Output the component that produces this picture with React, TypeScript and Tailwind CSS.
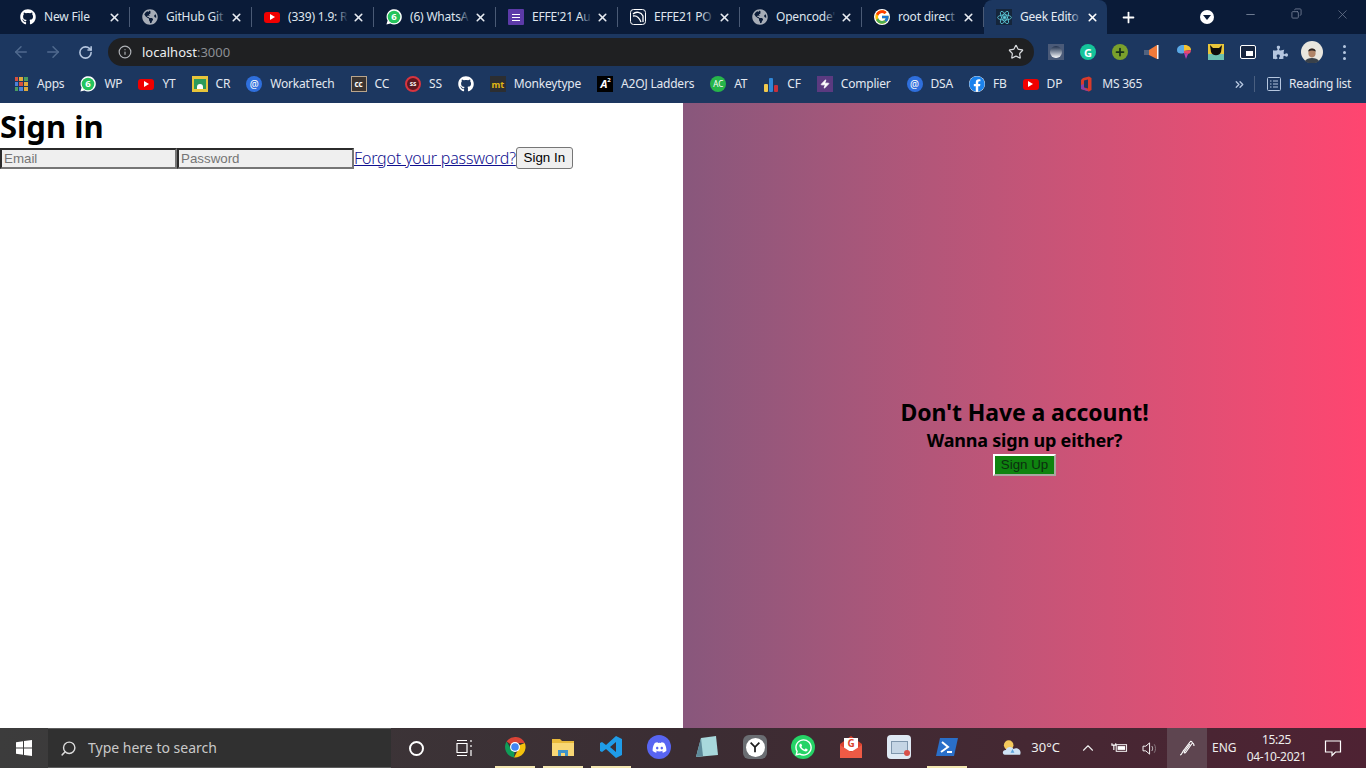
import type { ReactNode } from "react";
import { ArrowLeft, ArrowRight, ChevronUp, ChevronsRight, Copy, Info, Minus, Plus, RotateCw, Search, Star, X, Zap } from "lucide-react";
import { FaDiscord, FaFacebook, FaGithub, FaGlobeAmericas, FaPuzzlePiece, FaWhatsapp } from "react-icons/fa";
import { FcGoogle } from "react-icons/fc";

const Whats = () => (
  <svg viewBox="0 0 16 16" width="16" height="16">
    <path d="M0.4 15.6 L1.6 11.6 A7.6 7.6 0 1 1 4.4 14.4 Z" fill="#fff" />
    <circle cx="8" cy="8" r="6.3" fill="#25c45c" />
    <text x="8" y="11.3" textAnchor="middle" fontSize="9.5" fontWeight="700" fill="#fff">6</text>
  </svg>
);

const Yt = () => (
  <span className="flex h-[11px] w-4 items-center justify-center rounded-[3px] bg-[#f00000]">
    <span className="h-0 w-0 border-y-[3px] border-l-[5px] border-y-transparent border-l-white" />
  </span>
);

const Globe = () => <FaGlobeAmericas size={16} className="text-[#a7adb7]" />;

const At = () => (
  <span className="flex h-4 w-4 items-center justify-center rounded-full bg-[#2f6fdc] text-[10px] leading-none text-white">@</span>
);

const Forms = () => (
  <span className="flex h-4 w-4 flex-col items-center justify-center gap-[2px] rounded-[1px] bg-[#5c3aa8]">
    <span className="h-px w-2 bg-white" />
    <span className="h-px w-2 bg-white" />
    <span className="h-px w-2 bg-white" />
  </span>
);

const ReactLogo = () => (
  <span className="flex h-4 w-4 items-center justify-center bg-[#15253a]">
    <svg viewBox="0 0 24 24" width="15" height="15" fill="none" stroke="#5fd0df" strokeWidth="1.3">
      <circle cx="12" cy="12" r="2" fill="#5fd0df" />
      <ellipse cx="12" cy="12" rx="11" ry="4.2" />
      <ellipse cx="12" cy="12" rx="11" ry="4.2" transform="rotate(60 12 12)" />
      <ellipse cx="12" cy="12" rx="11" ry="4.2" transform="rotate(120 12 12)" />
    </svg>
  </span>
);

const Knight = () => (
  <svg viewBox="0 0 16 16" width="16" height="16">
    <rect x="0.5" y="0.5" width="15" height="15" rx="3" fill="#10213d" stroke="#fff" />
    <path d="M3 5 C6 2 11 3 13 7 L13 13 M3 7 C7 6 9 8 11 13" fill="none" stroke="#fff" strokeWidth="1.3" />
  </svg>
);

const tabs: { icon: ReactNode; title: string }[] = [
  { icon: <FaGithub size={16} className="text-white" />, title: "New File" },
  { icon: <Globe />, title: "GitHub Git" },
  { icon: <Yt />, title: "(339) 1.9: R" },
  { icon: <Whats />, title: "(6) WhatsA" },
  { icon: <Forms />, title: "EFFE'21 Au" },
  { icon: <Knight />, title: "EFFE21 PO" },
  { icon: <Globe />, title: "Opencode'" },
  { icon: <FcGoogle size={16} className="rounded-full bg-white" />, title: "root direct" },
];

const AppsGrid = () => {
  const colors = ["#d8503f", "#e0a93a", "#4a9d5f", "#4d82d8", "#d8503f", "#e0a93a", "#4a9d5f", "#4d82d8", "#e0a93a"];
  return (
    <span className="grid h-[14px] w-[13px] grid-cols-3 gap-[1.5px]">
      {colors.map((c, i) => (
        <span key={i} className="h-[3.6px] w-[3.4px]" style={{ backgroundColor: c }} />
      ))}
    </span>
  );
};

const bookmarks: { icon: ReactNode; label?: string }[] = [
  { icon: <AppsGrid />, label: "Apps" },
  { icon: <Whats />, label: "WP" },
  { icon: <Yt />, label: "YT" },
  {
    icon: (
      <span className="flex h-4 w-4 items-center justify-center bg-[#e8c53a]">
        <span className="flex h-[10px] w-[12px] items-end justify-center bg-[#2e9b5b]">
          <span className="h-[5px] w-[6px] rounded-t-full bg-white" />
        </span>
      </span>
    ),
    label: "CR",
  },
  { icon: <At />, label: "WorkatTech" },
  {
    icon: (
      <span className="flex h-4 w-4 items-center justify-center border border-[#b9a58c] bg-[#3a3431] text-[8px] font-bold leading-none text-white">cc</span>
    ),
    label: "CC",
  },
  {
    icon: (
      <span className="flex h-4 w-4 items-center justify-center rounded-full border-2 border-[#d8343f] bg-[#5c1820] text-[6px] font-bold leading-none text-white">SS</span>
    ),
    label: "SS",
  },
  { icon: <FaGithub size={16} className="text-white" /> },
  {
    icon: (
      <span className="flex h-4 w-4 items-center justify-center bg-[#2c2e31] text-[9px] font-bold leading-none text-[#e2b714]">mt</span>
    ),
    label: "Monkeytype",
  },
  {
    icon: (
      <span className="flex h-4 w-4 items-start justify-center bg-black pl-px text-[11px] font-bold italic leading-[15px] text-white">
        A<span className="text-[6px] not-italic leading-[8px]">2</span>
      </span>
    ),
    label: "A2OJ Ladders",
  },
  {
    icon: (
      <span className="flex h-4 w-4 items-center justify-center rounded-full bg-[#27b54a] text-[8px] leading-none text-white">AC</span>
    ),
    label: "AT",
  },
  {
    icon: (
      <span className="flex h-4 w-4 items-end justify-center gap-px">
        <span className="h-2 w-1 rounded-[1px] bg-[#f1c84c]" />
        <span className="h-[14px] w-1 rounded-[1px] bg-[#2f86d6]" />
        <span className="h-[7px] w-1 rounded-[1px] bg-[#c8303a]" />
      </span>
    ),
    label: "CF",
  },
  {
    icon: (
      <span className="flex h-4 w-4 items-center justify-center bg-[#5b3a80]">
        <Zap size={10} className="fill-white text-white" />
      </span>
    ),
    label: "Complier",
  },
  { icon: <At />, label: "DSA" },
  { icon: <FaFacebook size={16} className="rounded-full bg-white text-[#1b82ed]" />, label: "FB" },
  { icon: <Yt />, label: "DP" },
  {
    icon: (
      <svg viewBox="0 0 16 16" width="16" height="16">
        <path d="M5 2 L11 0.5 L13.5 2 V14 L11 15.5 L3 13 V4 Z" fill="#d83b2b" />
        <path d="M6 4.5 L10 3.5 V12.5 L6 11.5 Z" fill="#1c3760" />
        <path d="M3 13 L3 9 L6 8 V11.5 L11 15.5 Z" fill="#8a3ea8" />
      </svg>
    ),
    label: "MS 365",
  },
];

const extensions: ReactNode[] = [
  <span className="flex h-4 w-4 items-center justify-center bg-[#4a5a78]">
    <span className="h-3 w-3 rounded-full bg-gradient-to-b from-[#20304c] to-white" />
  </span>,
  <span className="flex h-4 w-4 items-center justify-center rounded-full bg-[#15c39a] text-[11px] font-bold leading-none text-white">G</span>,
  <span className="flex h-4 w-4 items-center justify-center rounded-full bg-[#7aa02c]">
    <Plus size={12} strokeWidth={3.5} className="text-[#16301a]" />
  </span>,
  <svg viewBox="0 0 16 16" width="16" height="16">
    <path d="M0 6 H5 V11 H0 Z" fill="#50627f" />
    <path d="M5 6 L13 1 V15 L5 11 Z" fill="#f07a3a" />
    <rect x="13" y="1" width="1.5" height="14" fill="#f3f3f3" />
  </svg>,
  <svg viewBox="0 0 16 16" width="16" height="16">
    <path d="M1 6 C1 2 5 0.5 8 1 V9 C5 10 1 10 1 6 Z" fill="#5aa9e6" />
    <path d="M8 1 C12 0.5 15 3 15 6 L8 7 Z" fill="#f4c22f" />
    <path d="M8 7 L15 6 C15 9 13 10 11 10 L8 9 Z" fill="#e8486a" />
    <path d="M8 9 L12 10 L10 15 Z" fill="#b83fb0" />
  </svg>,
  <svg viewBox="0 0 16 16" width="16" height="16">
    <rect width="16" height="16" fill="#e8c53a" />
    <rect y="10" width="16" height="6" fill="#6cc0b0" />
    <path d="M2 1 L5 4 H11 L14 1 L13 8 A5.5 5.5 0 0 1 3 8 Z" fill="#0c0c0c" />
  </svg>,
  <span className="flex h-[14px] w-4 items-end justify-end rounded-[2px] border border-white bg-[#16253f] p-[2px]">
    <span className="h-[5px] w-[7px] bg-white" />
  </span>,
  <FaPuzzlePiece size={15} className="text-[#b5c6df]" />,
  <svg viewBox="0 0 22 22" width="22" height="22">
    <circle cx="11" cy="11" r="11" fill="#e9e6de" />
    <path d="M4 20 C6 16 16 16 18 20 A11 11 0 0 1 4 20 Z" fill="#39414a" />
    <ellipse cx="11" cy="12" rx="3.6" ry="4.4" fill="#b08468" />
    <path d="M7.2 10.5 C7 6.5 15 6.5 14.8 10.5 C12 9 10 9 7.2 10.5 Z" fill="#2a2320" />
  </svg>,
  <span className="flex flex-col gap-[3px]">
    <span className="h-[3px] w-[3px] rounded-full bg-[#b5c6df]" />
    <span className="h-[3px] w-[3px] rounded-full bg-[#b5c6df]" />
    <span className="h-[3px] w-[3px] rounded-full bg-[#b5c6df]" />
  </span>,
];

const taskIcons: { icon: ReactNode; open?: boolean }[] = [
  {
    open: true,
    icon: (
      <svg viewBox="0 0 24 24" width="24" height="24">
        <path d="M12 12 L3.6 6.5 A10.5 10.5 0 0 1 21.8 8 L12 8 Z" fill="#db4437" />
        <path d="M12 12 L21.8 8 A10.5 10.5 0 0 1 11 22.4 L16 13 Z" fill="#f4c20d" />
        <path d="M12 12 L11 22.4 A10.5 10.5 0 0 1 3.6 6.5 L8 14 Z" fill="#0f9d58" />
        <circle cx="12" cy="12" r="5" fill="#fff" />
        <circle cx="12" cy="12" r="3.8" fill="#4285f4" />
      </svg>
    ),
  },
  {
    open: true,
    icon: (
      <svg viewBox="0 0 24 24" width="24" height="24">
        <path d="M1 4 H9 L11 6 H23 V21 H1 Z" fill="#e8b93a" />
        <rect x="1" y="8" width="22" height="13" fill="#f8d775" />
        <rect x="7" y="15" width="10" height="6" fill="#3f93c9" />
        <rect x="10" y="18" width="4" height="3" fill="#f8d775" />
      </svg>
    ),
  },
  {
    open: true,
    icon: (
      <svg viewBox="0 0 24 24" width="24" height="24">
        <path d="M17 1 L23 4 V20 L17 23 L7 14 L3 17 L1 16 V8 L3 7 L7 10 Z M17 7 L11 12 L17 17 Z" fill="#1f9ce8" fillRule="evenodd" />
      </svg>
    ),
  },
  {
    icon: (
      <span className="flex h-6 w-6 items-center justify-center rounded-full bg-[#5865f2]">
        <FaDiscord size={15} className="text-white" />
      </span>
    ),
  },
  {
    icon: (
      <svg viewBox="0 0 24 24" width="24" height="24">
        <path d="M6 3 L21 1 L23 20 L1 22 Z" fill="#a8d8dc" />
        <path d="M6 3 L1 22 L8 21 Z" fill="#5d8a9a" />
      </svg>
    ),
  },
  {
    icon: (
      <span className="flex h-6 w-6 items-center justify-center rounded-md bg-[#6a6d72]">
        <span className="flex h-[19px] w-[19px] items-center justify-center rounded-full bg-white">
          <svg viewBox="0 0 16 16" width="14" height="14" fill="none" stroke="#1d1d1d" strokeWidth="2">
            <path d="M3 3 L8 8 L13 3 M8 8 V14" />
          </svg>
        </span>
      </span>
    ),
  },
  {
    icon: (
      <span className="flex h-6 w-6 items-center justify-center rounded-full bg-[#25d366]">
        <FaWhatsapp size={19} className="text-white" />
      </span>
    ),
  },
  {
    icon: (
      <svg viewBox="0 0 24 24" width="24" height="24">
        <path d="M1 9 L12 1 L23 9 V23 H1 Z" fill="#d9432f" />
        <rect x="5" y="3" width="14" height="13" fill="#fff" />
        <path d="M1 10 L12 17 L23 10 V23 H1 Z" fill="#ee5a45" />
        <text x="12" y="12" textAnchor="middle" fontSize="10" fontWeight="700" fill="#d9432f">G</text>
      </svg>
    ),
  },
  {
    icon: (
      <span className="flex h-6 w-6 items-center justify-center rounded-sm bg-[#dfe9f4]">
        <span className="relative h-[13px] w-[17px] border border-[#7f96ad] bg-[#c5d5e5]">
          <span className="absolute -bottom-[3px] -right-[3px] h-[6px] w-[6px] rounded-full bg-[#d8504a]" />
        </span>
      </span>
    ),
  },
  {
    open: true,
    icon: (
      <svg viewBox="0 0 24 24" width="24" height="24">
        <path d="M5 3 H23 L19 21 H1 Z" fill="#2a6fc9" />
        <path d="M7 7 L13 12 L6 17" fill="none" stroke="#fff" strokeWidth="2" />
        <path d="M12 17 H17" stroke="#fff" strokeWidth="2" />
      </svg>
    ),
  },
];

function Tab({ icon, title }: { icon: ReactNode; title: string }) {
  return (
    <div className="flex h-full w-[122px] shrink-0 items-center">
      <div className="flex w-[121px] items-center pl-3 pr-2">
        <span className="flex w-4 shrink-0 items-center justify-center">{icon}</span>
        <span className="relative ml-2 flex-1 overflow-hidden whitespace-nowrap text-xs leading-4 tracking-[-0.2px] text-[#dfe5ee]">
          {title}
          <span className="absolute inset-y-0 right-0 w-[12px] bg-gradient-to-r from-transparent to-[#0a1b38]" />
        </span>
        <X size={13} strokeWidth={3} className="ml-1 shrink-0 text-[#e8ecf2]" />
      </div>
      <span className="h-5 w-px bg-[#4a5a75]" />
    </div>
  );
}

export default function App() {
  return (
    <div className="flex h-screen flex-col overflow-hidden font-['Noto_Sans',sans-serif]">
      {/* tab strip */}
      <div className="flex h-[34px] shrink-0 items-stretch bg-[#0a1b38] pl-2">
        {tabs.map((t) => (
          <Tab key={t.title} icon={t.icon} title={t.title} />
        ))}
        <div className="flex w-[123px] shrink-0 items-center rounded-t-lg bg-[#1c3760] pl-3 pr-2">
          <ReactLogo />
          <span className="relative ml-2 flex-1 overflow-hidden whitespace-nowrap text-xs leading-4 tracking-[-0.2px] text-[#e6ebf3]">
            Geek Edito
            <span className="absolute inset-y-0 right-0 w-[12px] bg-gradient-to-r from-transparent to-[#1c3760]" />
          </span>
          <X size={13} strokeWidth={3} className="ml-1 shrink-0 text-white" />
        </div>
        <div className="flex w-[44px] items-center justify-center">
          <Plus size={17} strokeWidth={2.5} className="text-white" />
        </div>
        <div className="ml-[49px] flex w-[16px] items-center justify-center">
          <span className="flex h-[14px] w-[14px] shrink-0 items-center justify-center rounded-full bg-white">
            <span className="h-0 w-0 border-x-[4px] border-t-[5px] border-x-transparent border-t-[#0a1b38]" />
          </span>
        </div>
        <div className="ml-[13px] flex w-[47px] items-start justify-center pt-2">
          <Minus size={13} className="text-[#6d7a90]" />
        </div>
        <div className="flex w-[47px] items-start justify-center pt-2">
          <Copy size={11} className="-scale-x-100 text-[#6d7a90]" />
        </div>
        <div className="flex w-[47px] items-start justify-center pt-[7px]">
          <X size={15} strokeWidth={1.2} className="text-[#6d7a90]" />
        </div>
      </div>

      {/* toolbar */}
      <div className="flex h-[33px] shrink-0 items-center bg-[#1c3760] pl-[12px] pt-[3px]">
        <ArrowLeft size={18} strokeWidth={2} className="text-[#506a8e]" />
        <ArrowRight size={18} strokeWidth={2} className="ml-[14px] text-[#506a8e]" />
        <RotateCw size={15} strokeWidth={2.5} className="ml-[16px] text-[#b5c6df]" />
        <div className="ml-[15px] flex h-7 w-[926px] items-center rounded-full bg-[#1f2022] pl-[10px] pr-[10px]">
          <Info size={14} className="text-[#b0b3b8]" />
          <span className="ml-[10px] text-[13px] leading-none text-[#eceef0]">
            localhost<span className="text-[#8c8f94]">:3000</span>
          </span>
          <Star size={16} strokeWidth={1.8} className="ml-auto text-[#d9dbde]" />
        </div>
        <div className="ml-[6px] flex items-center">
          {extensions.map((e, i) => (
            <span key={i} className="flex w-8 items-center justify-center">
              {e}
            </span>
          ))}
        </div>
      </div>

      {/* bookmarks */}
      <div className="flex h-9 shrink-0 items-center bg-[#1c3760] pb-[2px] pl-[13px] text-xs text-[#e3e8f0]">
        <div className="flex items-center gap-4">
          {bookmarks.map((b, i) => (
            <div key={i} className="flex items-center gap-2">
              <span className="flex w-4 items-center justify-center">{b.icon}</span>
              {b.label && <span className="tracking-[-0.2px]">{b.label}</span>}
            </div>
          ))}
        </div>
        <div className="ml-auto flex items-center pr-[15px]">
          <ChevronsRight size={13} strokeWidth={2.5} className="text-[#b5c6df]" />
          <span className="ml-[8px] h-4 w-px bg-[#4a5f80]" />
          <svg viewBox="0 0 14 14" width="14" height="14" fill="none" stroke="#b5c6df" className="ml-[12px]">
            <rect x="0.5" y="0.5" width="13" height="13" rx="1" />
            <path d="M3 4 H4.5 M6 4 H11 M3 7 H4.5 M6 7 H11 M3 10 H4.5 M6 10 H11" />
          </svg>
          <span className="ml-2 tracking-[-0.3px]">Reading list</span>
        </div>
      </div>

      {/* page */}
      <main className="grid min-h-0 flex-1 grid-cols-2 bg-white text-black">
        <section>
          <h1 className="h-[44px] text-[31px] font-bold leading-[47px]">Sign in</h1>
          <form className="flex items-center">
            <input
              placeholder="Email"
              className="h-[21px] w-[177px] border-2 border-b-[#767676] border-l-[#2b2b2b] border-r-[#767676] border-t-[#2b2b2b] bg-[#efefef] px-[2px] font-['Liberation_Sans',sans-serif] text-[13.33px] placeholder:text-[#757575]"
            />
            <input
              type="password"
              placeholder="Password"
              className="h-[21px] w-[177px] border-2 border-b-[#767676] border-l-[#2b2b2b] border-r-[#767676] border-t-[#2b2b2b] bg-[#efefef] px-[2px] font-['Liberation_Sans',sans-serif] text-[13.33px] placeholder:text-[#757575]"
            />
            <a href="#" className="text-base font-light leading-[21px] tracking-[-0.2px] text-[#10108f] underline">
              Forgot your password?
            </a>
            <button
              type="button"
              className="h-[22px] w-[57px] rounded-[3px] border border-[#767676] bg-[#efefef] font-['Liberation_Sans',sans-serif] text-[13.33px]"
            >
              Sign In
            </button>
          </form>
        </section>

        <section className="flex flex-col items-center justify-center bg-gradient-to-r from-[#88577c] to-[#ff4570] pt-[41px]">
          <h1 className="text-[23px] font-bold leading-[32px] tracking-[-0.1px]">Don't Have a account!</h1>
          <h3 className="text-lg font-bold leading-[24px] tracking-[-0.2px]">Wanna sign up either?</h3>
          <button
            type="button"
            className="mt-[2px] h-[22px] w-[63px] border-2 border-b-[#a8a8a0] border-l-white border-r-[#a8a8a0] border-t-white bg-[#0f830f] font-['Liberation_Sans',sans-serif] text-[13.33px] leading-none text-[#0c2e10]"
          >
            Sign Up
          </button>
        </section>
      </main>

      {/* taskbar */}
      <footer className="flex h-10 shrink-0 items-stretch bg-gradient-to-r from-[#3c3c3c] via-[#3b2d33] to-[#4e2233] text-white">
        <div className="flex w-12 items-center justify-center">
          <svg viewBox="0 0 16 16" width="16" height="16" fill="#fff">
            <path d="M0 2.2 L7 1.2 V7.5 H0 Z M8 1 L16 0 V7.5 H8 Z M0 8.5 H7 V14.8 L0 13.8 Z M8 8.5 H16 V16 L8 15 Z" />
          </svg>
        </div>
        <div className="flex w-[343px] items-center border-y border-[#5c5c5c] bg-[#303030] pl-3">
          <Search size={17} className="-scale-x-100 text-[#dcdcdc]" />
          <span className="ml-[11px] text-sm text-[#c9c9c9]">Type here to search</span>
        </div>
        <div className="ml-px flex w-12 items-center justify-center">
          <span className="h-[15px] w-[15px] rounded-full border-2 border-white" />
        </div>
        <div className="flex w-12 items-center justify-center">
          <svg viewBox="0 0 18 18" width="18" height="18" fill="none" stroke="#fff" strokeWidth="1.2">
            <path d="M2 1.5 H12 M2 16.5 H12 M2 4.5 H12 V13.5 H2 Z M16 1 V3 M16 6 V8 M16 11 V17" />
          </svg>
        </div>
        <div className="ml-[3px] flex">
          {taskIcons.map((t, i) => (
            <div key={i} className="h-10 w-12 px-1">
              <div className={`flex h-10 items-center justify-center border-b-2 ${t.open ? "border-[#f3e6b0]" : "border-transparent"}`}>
                {t.icon}
              </div>
            </div>
          ))}
        </div>
        <div className="ml-auto flex items-center pr-[18px] text-[#eee]">
          <svg viewBox="0 0 22 18" width="21" height="18" className="mr-[-2px]">
            <circle cx="7" cy="6" r="5" fill="#f4c95d" />
            <path d="M3 16 C0 16 0 11 4 11 C5 7 11 7 12 10 C16 8 21 11 19 16 Z" fill="#cfe3f5" />
            <path d="M11 10 L13 14 H9 Z" fill="#5aa2dc" />
          </svg>
          <span className="ml-[10px] text-[13px]">30°C</span>
          <ChevronUp size={18} strokeWidth={1.5} className="ml-[19px]" />
          <svg viewBox="0 0 18 12" width="17" height="12" className="ml-[14px]">
            <path d="M1 1 V3 H5 V1 M3 3 V8" stroke="#fff" strokeWidth="1.2" fill="none" />
            <rect x="5.5" y="2.5" width="11" height="7" fill="none" stroke="#fff" />
            <rect x="7" y="4" width="8" height="4" fill="#fff" />
          </svg>
          <svg viewBox="0 0 18 16" width="17" height="15" fill="none" stroke="#fff" className="ml-[14px]">
            <path d="M1 5.5 H4 L8 2 V14 L4 10.5 H1 Z" />
            <path d="M10.5 5.5 C11.5 7 11.5 9 10.5 10.5" stroke="#ddd" />
            <path d="M13 3.5 C14.8 6 14.8 10 13 12.5" stroke="#8a7a80" />
          </svg>
          <div className="ml-[8px] flex h-10 w-10 items-center justify-center bg-[#5e4550]">
            <svg viewBox="0 0 18 18" width="18" height="18" fill="none" stroke="#fff" strokeWidth="1.1">
              <path d="M2 16 C4 16 4 13 6 11 L12 3 C13 1.5 15 3 14 4.5 L8 13 C7 14.5 5.5 14 6.5 12.5 L12 5 M14 4 C15.5 4 16 5 16 7" />
            </svg>
          </div>
          <span className="ml-[5px] w-[26px] text-xs">ENG</span>
          <div className="ml-[9px] flex w-[59px] flex-col items-center whitespace-nowrap text-xs leading-[17px] tracking-[-0.3px]">
            <span>15:25</span>
            <span>04-10-2021</span>
          </div>
          <div className="ml-[12px] flex w-[30px] items-center justify-center">
            <svg viewBox="0 0 18 18" width="18" height="18" fill="none" stroke="#fff" strokeWidth="1.2">
              <path d="M1.5 2 H16.5 V13 H11.5 L8 16.5 V13 H1.5 Z" />
            </svg>
          </div>
        </div>
      </footer>
    </div>
  );
}
